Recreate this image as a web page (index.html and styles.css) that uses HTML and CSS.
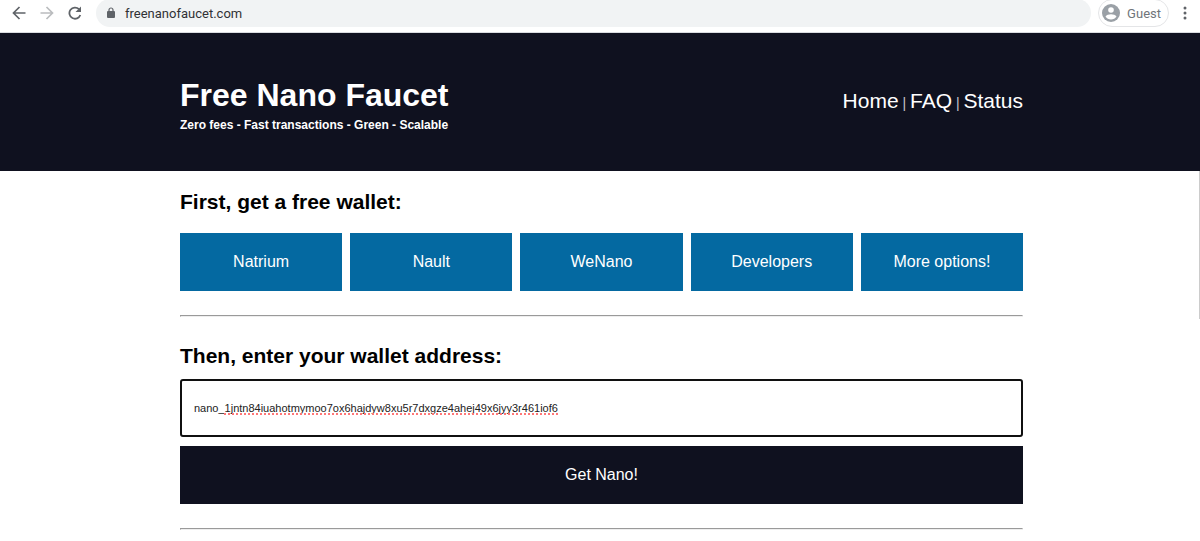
FILE: index.html
```
<!DOCTYPE html>
<html lang="en">
<head>
    <meta charset="UTF-8">
    <title>Free Nano Faucet</title>
    <link rel="stylesheet" href="styles.css">
</head>
<body>

<div class="browser-bar">
    <button class="icon-button" type="button" aria-label="Back">
        <svg width="14" height="14" viewBox="0 0 14 14" fill="none" stroke="#5f6368" stroke-width="1.7"><path d="M13.500 7H2M7.500 1L1.500 7l6 6"/></svg>
    </button>
    <button class="icon-button" type="button" aria-label="Forward">
        <svg width="14" height="14" viewBox="0 0 14 14" fill="none" stroke="#babcbe" stroke-width="1.7"><path d="M0.5 7H12M6.5 1l6 6-6 6"/></svg>
    </button>
    <button class="icon-button" type="button" aria-label="Reload">
        <svg width="14" height="14" viewBox="0 0 14 14"><path d="M12.300 9A5.600 5.600 0 1 1 11 3.200" fill="none" stroke="#5f6368" stroke-width="1.8"/><path d="M13 0.500v5.500H7.500z" fill="#5f6368"/></svg>
    </button>
    <div class="url-bar">
        <svg width="8" height="12" viewBox="0 0 8 12"><path d="M2 5V3a2 2 0 0 1 4 0v2" fill="none" stroke="#5f6368" stroke-width="1.2"/><rect y="4" width="8" height="7" rx="1" fill="#5f6368"/></svg>
        <span>freenanofaucet.com</span>
    </div>
    <button class="guest" type="button">
        <svg width="18" height="18" viewBox="0 0 18 18"><circle cx="9" cy="9" r="9" fill="#9aa0a6"/><circle cx="9" cy="6" r="2.8" fill="#fff"/><path d="M3.5 12.6C4.5 11 6.700 10.300 9 10.300s4.500 0.700 5.500 2.300c-1.200 1.900-3.200 3-5.500 3s-4.300-1.100-5.500-3z" fill="#fff"/></svg>
        Guest
    </button>
    <button class="icon-button menu" type="button" aria-label="Menu">
        <svg width="4" height="14" viewBox="0 0 4 14" fill="#5f6368"><circle cx="2" cy="2" r="1.5"/><circle cx="2" cy="7" r="1.5"/><circle cx="2" cy="12" r="1.5"/></svg>
    </button>
</div>

<header class="site-header">
    <div class="container header-row">
        <div>
            <h1>Free Nano Faucet</h1>
            <p class="tagline">Zero fees - Fast transactions - Green - Scalable</p>
        </div>
        <nav>
            <a href="#">Home</a> | <a href="#">FAQ</a> | <a href="#">Status</a>
        </nav>
    </div>
</header>

<main class="page">
    <div class="container">
        <h2>First, get a free wallet:</h2>
        <div class="wallets">
            <button type="button">Natrium</button>
            <button type="button">Nault</button>
            <button type="button">WeNano</button>
            <button type="button">Developers</button>
            <button type="button">More options!</button>
        </div>
        <hr>
        <form>
            <h2><label for="address">Then, enter your wallet address:</label></h2>
            <div class="address-field">
                <input id="address" type="text" spellcheck="false" value="nano_1jntn84iuahotmymoo7ox6hajdyw8xu5r7dxgze4ahej49x6jyy3r461iof6">
                <span class="spelling"></span>
            </div>
            <button class="submit" type="button">Get Nano!</button>
        </form>
        <hr>
    </div>
    <div class="scroll-edge"></div>
</main>

</body>
</html>
```
FILE: styles.css
```
body {
    margin: 0;
    background: #fff;
    color: #000;
    font-family: "Liberation Sans", Arial, sans-serif;
}
h1, h2, p {
    margin: 0;
}
button {
    border: 0;
    padding: 0;
    font-family: inherit;
    cursor: pointer;
}

/* browser toolbar */
.browser-bar {
    display: flex;
    align-items: center;
    height: 26px;
    padding: 0 13px 6px 12px;
    border-bottom: 1px solid #dadce0;
    font-family: Roboto, sans-serif;
    font-size: 13px;
}
.icon-button {
    display: flex;
    margin-right: 14px;
    background: none;
}
.url-bar {
    display: flex;
    flex: 1;
    align-items: center;
    gap: 10px;
    height: 28px;
    padding-left: 11px;
    border-radius: 14px;
    background: #f1f3f4;
    color: #303134;
}
.guest {
    display: flex;
    align-items: center;
    gap: 7px;
    box-sizing: border-box;
    height: 28px;
    margin: 0 14px 0 7px;
    padding: 0 7px 0 3px;
    border: 1px solid #e4e5e7;
    border-radius: 14px;
    background: #fff;
    color: #70757a;
    font-size: 13px;
}
.menu {
    margin-right: 0;
}

.container {
    margin: 0 14.75% 0 15%;
}

/* header */
.site-header {
    padding: 42px 0 36px;
    background: #0f111f;
    color: #fff;
}
.header-row {
    display: flex;
    justify-content: space-between;
}
h1 {
    font-size: 32px;
    line-height: 40px;
}
.tagline {
    font-size: 12px;
    font-weight: bold;
    line-height: 20px;
}
nav {
    padding-top: 12px;
    color: #c8c8cc;
    font-size: 14px;
    line-height: 28px;
}
nav a {
    color: #fff;
    font-size: 21px;
    text-decoration: none;
}

/* content */
.page {
    position: relative;
    padding-top: 16px;
}
h2 {
    font-size: 21px;
    line-height: 30px;
}
.wallets {
    display: flex;
    gap: 8px;
    padding-top: 16px;
}
.wallets button {
    flex: 1 1 0;
    height: 58px;
    background: #0469a1;
    color: #fff;
    font-size: 16px;
}
hr {
    margin: 24px 0;
}
.address-field {
    position: relative;
    margin: 8px 0 9px;
}
.address-field input {
    display: block;
    box-sizing: border-box;
    width: 100%;
    height: 58px;
    padding: 0 12px;
    border: 2px solid #101010;
    border-radius: 3px;
    outline: none;
    color: #222;
    font-family: inherit;
    font-size: 11px;
}
.spelling {
    position: absolute;
    top: 34px;
    left: 44px;
    width: 334px;
    border-bottom: 2px dotted #f77;
}
.submit {
    width: 100%;
    height: 58px;
    background: #0f111f;
    color: #fff;
    font-size: 16px;
}
.scroll-edge {
    position: absolute;
    top: 0;
    right: 0;
    width: 1px;
    height: 148px;
    background: #ccc;
}
```
